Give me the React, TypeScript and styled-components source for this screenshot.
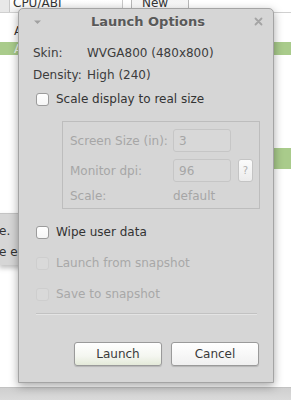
import styled, { createGlobalStyle } from "styled-components";

const Global = createGlobalStyle`
  html, body {
    margin: 0;
    padding: 0;
    background: #ffffff;
  }
  body {
    font-family: "DejaVu Sans", "Noto Sans", sans-serif;
    font-size: 12px;
    color: #3c3c3c;
  }
`;

const Page = styled.div`
  position: relative;
  width: 291px;
  height: 400px;
  overflow: hidden;
  background: #ffffff;
  display: flex;
  flex-direction: column;
`;

/* ---------- window behind the dialog ---------- */

const HeaderStrip = styled.div`
  display: flex;
  height: 13px;
  border-bottom: 1px solid #d0d0d0;
  box-sizing: border-box;
`;

const HeaderStub = styled.div`
  width: 9px;
  background: #e8e8e8;
  border-right: 1px solid #c8c8c8;
`;

const HeaderCell = styled.div`
  width: 109px;
  background: linear-gradient(#ffffff, #f2f2f2);
  border-right: 1px solid #c8c8c8;
  padding-left: 3px;
  line-height: 6px;
  overflow: hidden;
  color: #333;
`;

const NewButton = styled.div`
  margin-left: 8px;
  width: 58px;
  background: linear-gradient(#f4f4f4, #ffffff);
  border: 1px solid #b8b8b8;
  border-top: none;
  border-radius: 0 0 3px 3px;
  padding-left: 10px;
  box-sizing: border-box;
  line-height: 6px;
  overflow: hidden;
  color: #333;
`;

const ListRow = styled.div<{ $selected?: boolean }>`
  height: ${(p) => (p.$selected ? 13 : 29)}px;
  display: flex;
  align-items: ${(p) => (p.$selected ? "center" : "flex-end")};
  padding: 0 0 ${(p) => (p.$selected ? 0 : 4)}px 14px;
  box-sizing: border-box;
  background: ${(p) => (p.$selected ? "#a9cb8b" : "transparent")};
  color: ${(p) => (p.$selected ? "#f4f8ee" : "#333")};
`;

const Gap = styled.div<{ $h: number }>`
  height: ${(p) => p.$h}px;
  flex-shrink: 0;
`;

const RightBarStrip = styled.div`
  height: 21px;
  display: flex;
  justify-content: flex-end;
`;

const GreenBar = styled.div`
  width: 18px;
  background: #a9cb8b;
`;

const StatusPanel = styled.div`
  width: 160px;
  height: 52px;
  background: #d6d6d6;
  border-top: 1px solid #c4c4c4;
  box-sizing: border-box;
  box-shadow: 0 3px 5px rgba(0, 0, 0, 0.25);
  display: flex;
  flex-direction: column;
  padding-top: 10px;
  gap: 7px;
  color: #333;
  line-height: 14px;
  margin-left: -1px;
`;

const BottomBand = styled.div`
  margin-top: auto;
  height: 12px;
  background: linear-gradient(#cfcfcf, #dadada);
  border-top: 1px solid #c2c2c2;
`;

/* ---------- dialog ---------- */

const Dialog = styled.div`
  position: absolute;
  left: 18px;
  top: 8px;
  width: 256px;
  height: 375px;
  box-sizing: border-box;
  background: #d6d6d6;
  border: 1px solid #a4a4a4;
  border-radius: 5px 5px 0 0;
  box-shadow: 0 3px 10px rgba(0, 0, 0, 0.35);
  display: flex;
  flex-direction: column;
`;

const TitleBar = styled.div`
  height: 23px;
  display: flex;
  align-items: center;
  justify-content: space-between;
  padding: 0 10px 0 14px;
  margin-top: 1px;
`;

const Title = styled.div`
  font-weight: bold;
  font-size: 13px;
  color: #595959;
  text-shadow: 0 1px 0 rgba(255, 255, 255, 0.4);
`;

const Body = styled.div`
  display: flex;
  flex-direction: column;
  padding: 0 14px 0 14px;
`;

const InfoRow = styled.div`
  display: flex;
  height: 22px;
  align-items: center;
`;

const InfoLabel = styled.div`
  width: 54px;
`;

const CheckRow = styled.label<{ $disabled?: boolean }>`
  display: flex;
  align-items: center;
  gap: 7px;
  height: 16px;
  padding-left: 3px;
  color: ${(p) => (p.$disabled ? "#a8a8a8" : "#333333")};
`;

const Box = styled.span<{ $disabled?: boolean }>`
  width: 13px;
  height: 13px;
  border-radius: 3px;
  box-sizing: border-box;
  flex-shrink: 0;
  background: ${(p) => (p.$disabled ? "#d9d9d9" : "linear-gradient(#ffffff, #f6f6f6)")};
  border: 1px solid ${(p) => (p.$disabled ? "#cecece" : "#9c9c9c")};
`;

const Group = styled.div`
  margin: 14px 0 0 29px;
  width: 198px;
  height: 88px;
  box-sizing: border-box;
  border: 1px solid #bdbdbd;
  padding: 7px 6px 0 7px;
  display: flex;
  flex-direction: column;
  gap: 7px;
  color: #a6a6a6;
`;

const GroupRow = styled.div`
  display: flex;
  align-items: center;
  height: 23px;
`;

const GroupLabel = styled.div`
  width: 103px;
  white-space: nowrap;
`;

const Field = styled.div`
  width: 58px;
  height: 23px;
  box-sizing: border-box;
  border: 1px solid #c6c6c6;
  border-radius: 3px;
  background: #d8d8d8;
  padding-left: 5px;
  display: flex;
  align-items: center;
  color: #a6a6a6;
`;

const HelpButton = styled.div`
  margin-left: 7px;
  width: 15px;
  height: 23px;
  box-sizing: border-box;
  border: 1px solid #c4c4c4;
  border-radius: 3px;
  background: linear-gradient(#fbfbfb, #ececec);
  display: flex;
  align-items: center;
  justify-content: center;
  font-size: 10px;
  color: #b0b0b0;
`;

const Separator = styled.div`
  margin: 11px 2px 0 3px;
  height: 1px;
  background: #c2c2c2;
  box-shadow: 0 1px 0 rgba(255, 255, 255, 0.35);
`;

const ButtonRow = styled.div`
  display: flex;
  justify-content: flex-end;
  gap: 9px;
  margin-top: 28px;
`;

const Button = styled.div<{ $default?: boolean }>`
  width: 88px;
  height: 24px;
  box-sizing: border-box;
  border: 1px solid #9a9a9a;
  border-radius: 3px;
  background: ${(p) =>
    p.$default ? "linear-gradient(#ffffff, #f4f6f0 60%, #e4ead9)" : "linear-gradient(#ffffff, #f0f0f0)"};
  display: flex;
  align-items: center;
  justify-content: center;
  color: #3a3a3a;
  box-shadow: 0 1px 1px rgba(0, 0, 0, 0.15);
`;

function Check({ label, disabled }: { label: string; disabled?: boolean }) {
  return (
    <CheckRow $disabled={disabled}>
      <Box $disabled={disabled} />
      {label}
    </CheckRow>
  );
}

export default function App() {
  return (
    <>
      <Global />
      <Page>
        <HeaderStrip>
          <HeaderStub />
          <HeaderCell>CPU/ABI</HeaderCell>
          <NewButton>New</NewButton>
        </HeaderStrip>
        <ListRow>A</ListRow>
        <ListRow $selected>A</ListRow>
        <Gap $h={93} />
        <RightBarStrip>
          <GreenBar />
        </RightBarStrip>
        <Gap $h={44} />
        <StatusPanel>
          <span>e.</span>
          <span>e er</span>
        </StatusPanel>
        <BottomBand />

        <Dialog>
          <TitleBar>
            <svg width="9" height="6" viewBox="0 0 9 6">
              <path d="M1 1.5 L8 1.5 L4.5 5 Z" fill="#a0a0a0" />
            </svg>
            <Title>Launch Options</Title>
            <svg width="9" height="9" viewBox="0 0 9 9">
              <path d="M1.5 1.5 L7.5 7.5 M7.5 1.5 L1.5 7.5" stroke="#a4a4a4" strokeWidth="1.8" strokeLinecap="round" />
            </svg>
          </TitleBar>
          <Body>
            <InfoRow style={{ marginTop: 9 }}>
              <InfoLabel>Skin:</InfoLabel>
              WVGA800 (480x800)
            </InfoRow>
            <InfoRow>
              <InfoLabel>Density:</InfoLabel>
              High (240)
            </InfoRow>
            <Gap $h={5} />
            <Check label="Scale display to real size" />
            <Group>
              <GroupRow>
                <GroupLabel>Screen Size (in):</GroupLabel>
                <Field>3</Field>
              </GroupRow>
              <GroupRow>
                <GroupLabel>Monitor dpi:</GroupLabel>
                <Field>96</Field>
                <HelpButton>?</HelpButton>
              </GroupRow>
              <GroupRow style={{ height: 14 }}>
                <GroupLabel>Scale:</GroupLabel>
                default
              </GroupRow>
            </Group>
            <Gap $h={15} />
            <Check label="Wipe user data" />
            <Gap $h={15} />
            <Check label="Launch from snapshot" disabled />
            <Gap $h={15} />
            <Check label="Save to snapshot" disabled />
            <Separator />
            <ButtonRow>
              <Button $default>Launch</Button>
              <Button>Cancel</Button>
            </ButtonRow>
          </Body>
        </Dialog>
      </Page>
    </>
  );
}
